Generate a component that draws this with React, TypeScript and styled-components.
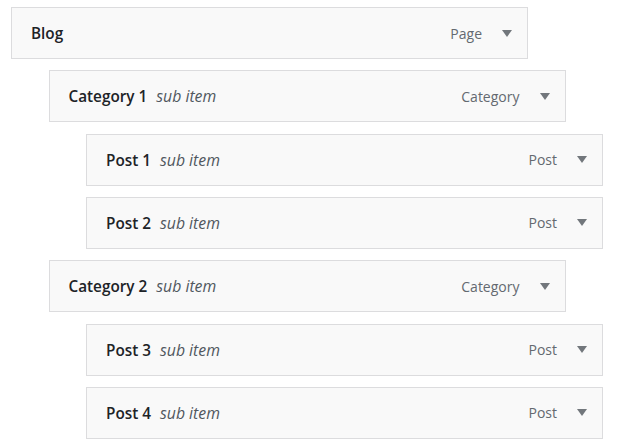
import React from "react";
import styled, { createGlobalStyle } from "styled-components";

const Global = createGlobalStyle`
  html, body { margin: 0; padding: 0; background: #ffffff; }
  body { font-family: "Open Sans", "Noto Sans", "Liberation Sans", sans-serif; }
`;

const List = styled.ul`
  list-style: none;
  margin: 0;
  padding: 7px 0 0 11px;
  display: flex;
  flex-direction: column;
  gap: 11.33px;
`;

const Item = styled.li<{ $depth: number }>`
  box-sizing: border-box;
  width: 517px;
  height: 52px;
  margin-left: ${(p) => p.$depth * 37.5}px;
  background: #f9f9f9;
  border: 1px solid #dcdcde;
  display: flex;
  align-items: center;
  padding: 0 15px 0 19px;
`;

const Title = styled.span`
  flex: 1;
  display: flex;
  align-items: baseline;
  gap: 9px;
  font-size: 15.3px;
  font-weight: 600;
  color: #1d2327;
`;

const Sub = styled.span`
  font-size: 15.8px;
  font-style: italic;
  font-weight: 400;
  color: #50575e;
`;

const Controls = styled.span`
  display: flex;
  align-items: center;
  gap: 20px;
  font-size: 14px;
  color: #646970;
`;

const Arrow = () => (
  <svg width="10" height="7" viewBox="0 0 10 7" aria-hidden="true">
    <polygon points="0,0 10,0 5,7" fill="#72777c" />
  </svg>
);

const items = [
  { title: "Blog", depth: 0, type: "Page", sub: false },
  { title: "Category 1", depth: 1, type: "Category", sub: true },
  { title: "Post 1", depth: 2, type: "Post", sub: true },
  { title: "Post 2", depth: 2, type: "Post", sub: true },
  { title: "Category 2", depth: 1, type: "Category", sub: true },
  { title: "Post 3", depth: 2, type: "Post", sub: true },
  { title: "Post 4", depth: 2, type: "Post", sub: true },
];

export default function App() {
  return (
    <>
      <Global />
      <List>
        {items.map((it) => (
          <Item key={it.title} $depth={it.depth}>
            <Title>
              {it.title}
              {it.sub && <Sub>sub item</Sub>}
            </Title>
            <Controls>
              {it.type}
              <Arrow />
            </Controls>
          </Item>
        ))}
      </List>
    </>
  );
}
